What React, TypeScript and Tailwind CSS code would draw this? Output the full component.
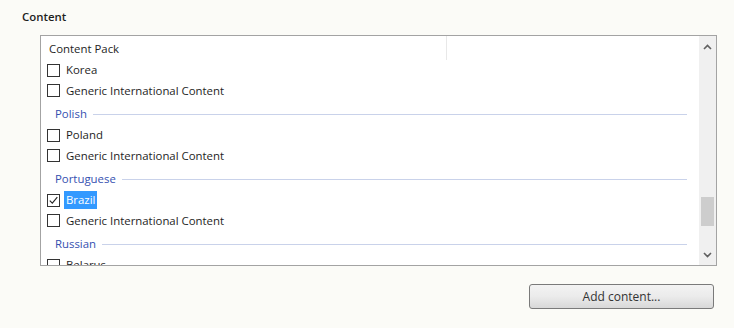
import React from 'react';

type Row =
  | { kind: 'item'; label: string; checked?: boolean; selected?: boolean }
  | { kind: 'group'; label: string };

const rows: Row[] = [
  { kind: 'item', label: 'Korea' },
  { kind: 'item', label: 'Generic International Content' },
  { kind: 'group', label: 'Polish' },
  { kind: 'item', label: 'Poland' },
  { kind: 'item', label: 'Generic International Content' },
  { kind: 'group', label: 'Portuguese' },
  { kind: 'item', label: 'Brazil', checked: true, selected: true },
  { kind: 'item', label: 'Generic International Content' },
  { kind: 'group', label: 'Russian' },
  { kind: 'item', label: 'Belarus' },
];

const CheckBox: React.FC<{ checked?: boolean }> = ({ checked }) => (
  <div className="w-[13px] h-[13px] border border-[#333333] bg-white flex items-center justify-center shrink-0">
    {checked && (
      <svg width="11" height="11" viewBox="0 0 11 11">
        <path d="M1.8 5.6 L4.3 8.2 L9.3 2.2" fill="none" stroke="#222222" strokeWidth="1.1" />
      </svg>
    )}
  </div>
);

const App: React.FC = () => {
  return (
    <div
      className="w-[734px] h-[328px] bg-[#fbfbf7] text-[11.4px] text-[#1e1e1e] overflow-hidden"
      style={{ fontFamily: '"Open Sans", "Noto Sans", sans-serif' }}
    >
      <div className="pl-[22px] pt-[9px] h-[35px] font-semibold leading-[16px]">Content</div>

      <div className="ml-[40px] w-[677px] h-[231px] border border-[#a3a3a3] bg-white flex">
        <div className="flex-1 overflow-hidden">
          {/* column header */}
          <div className="h-[24px] flex">
            <div className="w-[406px] pl-[8px] pt-[1px] flex items-center border-r border-[#e8e8e8]">Content Pack</div>
          </div>

          {rows.map((row, i) =>
            row.kind === 'group' ? (
              <div key={i} className="h-[24px] pt-[2px] pl-[14px] pr-[12px] flex items-center gap-[6px]">
                <span className="text-[#3550b0]">{row.label}</span>
                <div className="flex-1 h-px bg-[#c9d2ea]" />
              </div>
            ) : (
              <div key={i} className="h-[20.5px] pl-[6px] flex items-center gap-[4px]">
                <CheckBox checked={row.checked} />
                <span
                  className={
                    row.selected
                      ? 'bg-[#3399ff] text-white px-[2px] leading-[18px]'
                      : 'px-[2px] leading-[18px]'
                  }
                >
                  {row.label}
                </span>
              </div>
            )
          )}
        </div>

        {/* vertical scrollbar */}
        <div className="w-[17px] bg-[#f0f0f0] flex flex-col items-center">
          <div className="h-[20px] flex items-center justify-center pt-[2px]">
            <svg width="9" height="6" viewBox="0 0 9 6">
              <path d="M1 5 L4.5 1.5 L8 5" fill="none" stroke="#606060" strokeWidth="1.6" />
            </svg>
          </div>
          <div className="flex-1 w-full flex flex-col">
            <div className="h-[141px]" />
            <div className="mx-[2px] h-[29px] bg-[#cdcdcd]" />
          </div>
          <div className="h-[20px] flex items-center justify-center">
            <svg width="9" height="6" viewBox="0 0 9 6">
              <path d="M1 1 L4.5 4.5 L8 1" fill="none" stroke="#606060" strokeWidth="1.6" />
            </svg>
          </div>
        </div>
      </div>

      <div className="ml-[529px] mt-[18px]">
        <button className="w-[185px] h-[25px] rounded-[3px] border border-[#7a7a7a] bg-gradient-to-b from-[#f3f3f3] via-[#ebebeb] to-[#d8d8d8] text-[#333333] text-[12px] flex items-center justify-center">
          Add content...
        </button>
      </div>
    </div>
  );
};

export default App;
